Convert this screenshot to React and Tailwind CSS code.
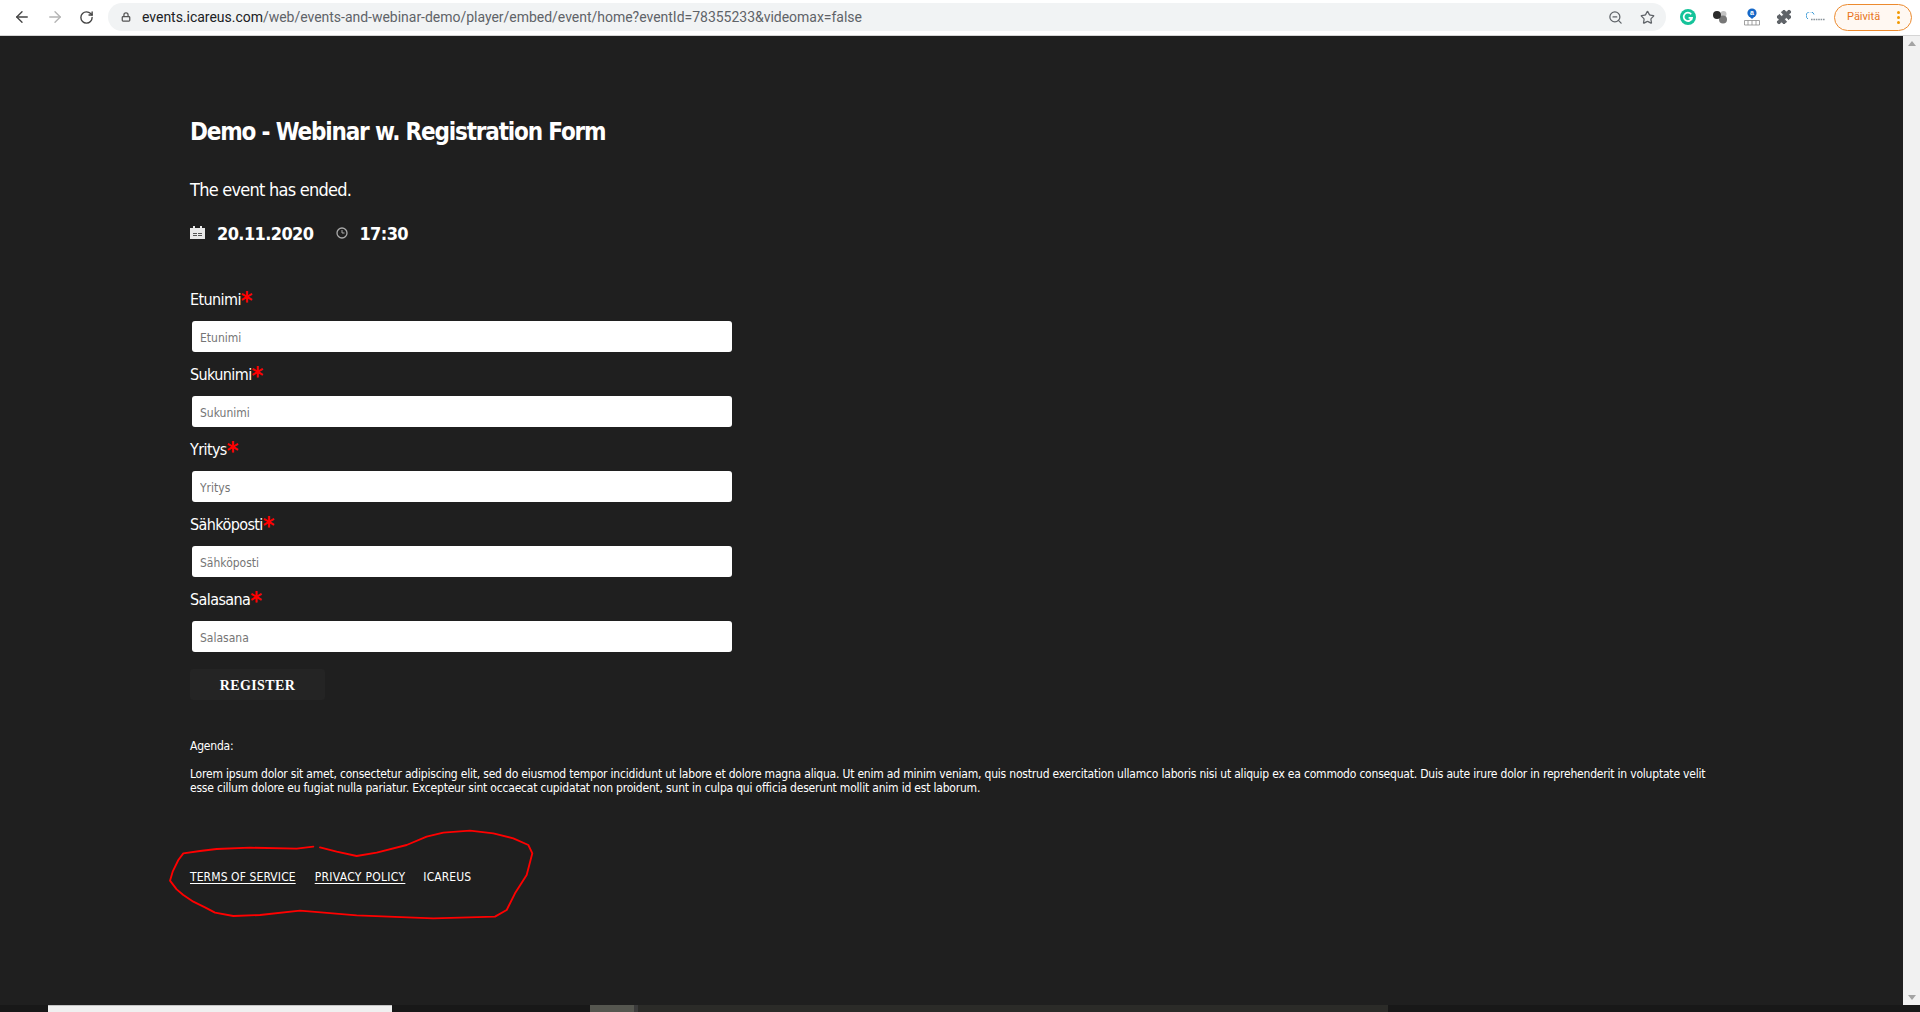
import { ArrowLeft, ArrowRight, RotateCw, Lock, ZoomOut, Star, Puzzle } from "lucide-react";

const fields = ["Etunimi", "Sukunimi", "Yritys", "Sähköposti", "Salasana"];

const pageFont = "font-['DejaVu_Sans_Condensed','DejaVu_Sans',sans-serif]";

function ToolbarButton({ children }) {
  return <div className="flex w-[33px] items-center justify-center text-[#5f6368]">{children}</div>;
}

function ExtensionSlot({ children }) {
  return <div className="flex h-8 w-8 items-center justify-center">{children}</div>;
}

function Toolbar() {
  return (
    <div className="flex h-9 shrink-0 items-center border-b border-[#d5d5d5] bg-white pb-[3px] pl-[5px] pr-2 pt-[2px]">
      <ToolbarButton><ArrowLeft size={18} strokeWidth={1.8} className="text-[#444]" /></ToolbarButton>
      <ToolbarButton><ArrowRight size={18} strokeWidth={1.8} className="text-[#b4b4b4]" /></ToolbarButton>
      <ToolbarButton><RotateCw size={15} strokeWidth={2.2} className="-ml-[2px] text-[#444]" /></ToolbarButton>

      <div className="ml-1 flex h-7 flex-1 items-center rounded-full bg-[#f1f3f4] pl-[13px] pr-[9px]">
        <Lock size={10} strokeWidth={3} className="text-[#555]" />
        <div className="ml-[11px] flex-1 font-['Roboto',sans-serif] text-[14px] tracking-[-0.02px] text-[#5f6368]">
          <span className="text-[#202124]">events.icareus.com</span>
          /web/events-and-webinar-demo/player/embed/event/home?eventId=78355233&videomax=false
        </div>
        <ZoomOut size={15} strokeWidth={2} className="text-[#5f6368]" />
        <Star size={15} strokeWidth={2} className="ml-[17px] mr-[2px] text-[#5f6368]" />
      </div>

      <div className="ml-[6px] flex">
        <ExtensionSlot>
          <svg width="16" height="16" viewBox="0 0 16 16">
            <circle cx="8" cy="8" r="8" fill="#15c39a" />
            <path d="M11.2 5.2A4.2 4.2 0 1 0 12 8.8H8.6" fill="none" stroke="#fff" strokeWidth="1.7" />
            <path d="M11.6 8.8v2.4" stroke="#fff" strokeWidth="1.5" />
          </svg>
        </ExtensionSlot>
        <ExtensionSlot>
          <svg width="16" height="16" viewBox="0 0 16 16">
            <circle cx="11.5" cy="5" r="3" fill="#c2c2c2" />
            <circle cx="11" cy="10.5" r="4" fill="#777" />
            <circle cx="5" cy="6" r="4" fill="#2b2b2b" />
          </svg>
        </ExtensionSlot>
        <ExtensionSlot>
          <svg width="16" height="18" viewBox="0 0 16 18">
            <circle cx="8" cy="5" r="4.6" fill="#1668c7" />
            <path d="M5.5 8.5 8 11l2.5-2.5z" fill="#1668c7" />
            <text x="8" y="7.2" textAnchor="middle" fontSize="7" fontWeight="700" fill="#fff" fontFamily="Liberation Sans">a</text>
            <path d="M.5 17V12.5h15V17zM4 12.5V17M8 12.5V17M12 12.5V17" fill="none" stroke="#8a8a8a" strokeWidth="0.8" />
          </svg>
        </ExtensionSlot>
        <ExtensionSlot>
          <Puzzle size={16} fill="#5f6368" strokeWidth={1.5} className="text-[#5f6368]" />
        </ExtensionSlot>
        <ExtensionSlot>
          <svg width="20" height="10" viewBox="0 0 20 10">
            <path d="M2 7A4 4 0 1 1 8 2.5" fill="none" stroke="#3d9bd6" strokeWidth="1" />
            <path d="M5 7.5h14" stroke="#8b959c" strokeWidth="1.6" strokeDasharray="1.6 0.8" />
          </svg>
        </ExtensionSlot>
      </div>

      <div className="ml-[2px] flex h-[27px] w-[78px] items-center justify-between rounded-full border border-[#ec8a2e] bg-[#fff8f2] pl-[12px] pr-[11px] font-['Roboto',sans-serif] text-[11px] text-[#e8741c]">
        Päivitä
        <span className="flex flex-col gap-[2px]">
          <span className="h-[3px] w-[3px] rounded-full bg-[#f29900]" />
          <span className="h-[3px] w-[3px] rounded-full bg-[#f29900]" />
          <span className="h-[3px] w-[3px] rounded-full bg-[#f29900]" />
        </span>
      </div>
    </div>
  );
}

function Field({ name, first }) {
  return (
    <div className={first ? "mt-[41px]" : "mt-[9px]"}>
      <div className="flex h-6 items-center pt-[3px] text-[16px] leading-6 tracking-[-0.6px] text-white">
        {name}
        <span className="mt-[2px] text-[25px] font-bold leading-6 text-[#ff0000]">*</span>
      </div>
      <input
        type="text"
        placeholder={name}
        className="ml-[2px] mt-[11px] block h-[31px] w-[540px] rounded-[3px] bg-white px-2 pt-[2px] text-[12px] text-[#333] outline-none placeholder:text-[#757575]"
      />
    </div>
  );
}

function ScribbleCircle() {
  return (
    <svg className="pointer-events-none absolute left-[-40px] top-[-59px]" width="400" height="120" viewBox="0 0 1200 360" fill="none">
      <path
        d="M490 110 440 116 300 113 200 117 150 123 100 130 85 150 68 185 60 212 80 238 100 255 130 275 165 292 195 308 250 318 330 315 450 302 620 316 850 325 1035 320 1070 300 1095 250 1130 195 1147 130 1135 105 1090 85 1030 70 960 62 880 68 830 80 770 105 680 128 620 138 560 125 510 112"
        stroke="#ff0000"
        strokeWidth="5.5"
        strokeLinejoin="round"
        strokeLinecap="round"
      />
    </svg>
  );
}

export default function App() {
  return (
    <div className={`flex h-[1012px] w-[1920px] flex-col overflow-hidden bg-[#1f1f1f] ${pageFont}`}>
      <Toolbar />

      <div className="flex min-h-0 flex-1">
        <main className="flex-1 pl-[190px] pt-[80px] text-white">
          <h1 className="h-[30px] pt-[1px] text-[24px] font-bold leading-[30px] tracking-[-1.17px]">Demo - Webinar w. Registration Form</h1>
          <p className="mt-[31px] h-6 pt-[1px] text-[18px] leading-6 tracking-[-0.75px]">The event has ended.</p>

          <div className="mt-5 flex h-6 items-center text-[18px] font-bold">
            <svg width="15" height="13" viewBox="0 0 15 13" className="-mt-[1px] text-[#e8e8e8]">
              <path fill="currentColor" d="M0 2h3V0h2v2h5V0h2v2h3v11H0z" />
              <path fill="#555" d="M3 7h4v1H3zM8 7h4v1H8zM3 9h4v1H3zM8 9h4v1H8z" />
            </svg>
            <span className="ml-3 tracking-[-0.6px]">20.11.2020</span>
            <svg width="12" height="12" viewBox="0 0 12 12" fill="none" className="ml-[23px] -mt-[1px] text-[#aaa]">
              <circle cx="6" cy="6" r="5" stroke="currentColor" strokeWidth="1.3" />
              <path d="M6 3v3h2.5" stroke="currentColor" />
            </svg>
            <span className="ml-[11px] tracking-[-0.6px]">17:30</span>
          </div>

          {fields.map((name, i) => (
            <Field key={name} name={name} first={i === 0} />
          ))}

          <button className="mt-[17px] block h-[31px] w-[135px] rounded-[3px] bg-[#242424] pt-[1px] font-['Liberation_Serif',serif] text-[14px] font-bold tracking-[0.4px] text-white">
            REGISTER
          </button>

          <p className="mt-[39px] h-[14px] text-[12px] leading-[14px] tracking-[-0.2px]">Agenda:</p>
          <p className="mt-[13px] w-[1530px] pt-[1px] text-[12px] leading-[14px] tracking-[-0.2px]">
            Lorem ipsum dolor sit amet, consectetur adipiscing elit, sed do eiusmod tempor incididunt ut labore et dolore magna aliqua. Ut enim ad minim veniam, quis nostrud exercitation ullamco laboris nisi ut aliquip ex ea commodo consequat. Duis aute irure dolor in reprehenderit in voluptate velit esse cillum dolore eu fugiat nulla pariatur. Excepteur sint occaecat cupidatat non proident, sunt in culpa qui officia deserunt mollit anim id est laborum.
          </p>

          <footer className="relative mt-[74px] flex h-4 items-center text-[12px] leading-4 tracking-[0.1px]">
            <a className="underline underline-offset-2">TERMS OF SERVICE</a>
            <a className="ml-[19px] tracking-[0.3px] underline underline-offset-2">PRIVACY POLICY</a>
            <a className="ml-[18px]">ICAREUS</a>
            <ScribbleCircle />
          </footer>
        </main>

        <div className="flex w-[17px] flex-col items-center justify-between bg-[#f1f1f1] py-[5px]">
          <div className="h-0 w-0 border-x-[4px] border-b-[5px] border-x-transparent border-b-[#a3a3a3]" />
          <div className="h-0 w-0 border-x-[4px] border-t-[5px] border-x-transparent border-t-[#a3a3a3]" />
        </div>
      </div>

      <div className="flex h-[7px] shrink-0 bg-[#181818]">
        <div className="ml-[48px] w-[344px] border-t border-[#c4c4c4] bg-[#f0f0f0]" />
        <div className="ml-[198px] w-[44px] bg-[#55564f]" />
        <div className="w-[4px] bg-[#3b3b3b]" />
        <div className="w-[750px] bg-[#2b2b28]" />
      </div>
    </div>
  );
}
